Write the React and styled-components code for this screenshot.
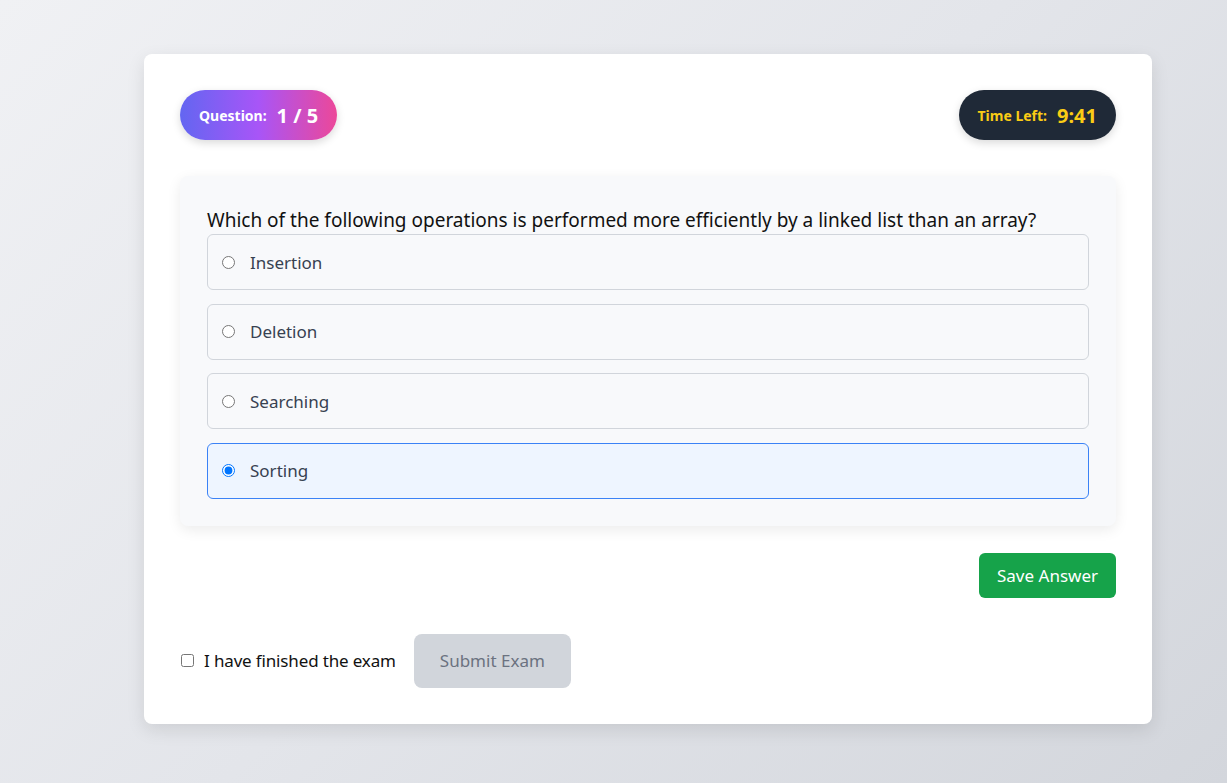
import { useState } from 'react';
import styled, { createGlobalStyle } from 'styled-components';

const GlobalStyle = createGlobalStyle`
    html, body {
        margin: 0;
        padding: 0;
    }
    body {
        font-family: "Noto Sans", "Open Sans", Arial, sans-serif;
        background: linear-gradient(135deg, #f0f1f4 0%, #e3e5ea 50%, #d3d6dc 100%);
        min-height: 100vh;
    }
`;

// Página
const Page = styled.div`
    min-height: 100vh;
    box-sizing: border-box;
    padding: 54px 0 60px 144px;
`;

// Cartão principal
const Card = styled.div`
    width: 1008px;
    box-sizing: border-box;
    background: #ffffff;
    border-radius: 8px;
    padding: 36px;
    box-shadow: 0 6px 18px rgba(0, 0, 0, 0.1);
`;

const TopBar = styled.div`
    display: flex;
    justify-content: space-between;
    align-items: center;
    margin-bottom: 36px;
`;

const Pill = styled.div`
    height: 50px;
    box-sizing: border-box;
    padding: 0 19px;
    border-radius: 25px;
    display: flex;
    align-items: center;
    gap: 10px;
    color: ${props => (props.dark ? '#facc15' : '#ffffff')};
    background: ${props => (props.dark
        ? '#1f2937'
        : 'linear-gradient(90deg, #6366f1 0%, #a855f7 50%, #ec4899 100%)')};
    box-shadow: 0 3px 8px rgba(0, 0, 0, 0.15);
`;

const PillLabel = styled.span`
    font-size: 14px;
    font-weight: 700;
`;

const PillValue = styled.span`
    font-size: 20px;
    font-weight: 700;
`;

// Painel da pergunta
const QuestionPanel = styled.div`
    background: #f8f9fb;
    border-radius: 8px;
    padding: 30px 27px 27px;
    box-shadow: 0 4px 14px rgba(0, 0, 0, 0.08);
`;

const QuestionText = styled.p`
    margin: 0;
    font-size: 19px;
    line-height: 28px;
    color: #111111;
`;

const Options = styled.div`
    display: flex;
    flex-direction: column;
    gap: 13.67px;
`;

const Option = styled.label`
    display: flex;
    align-items: center;
    height: 56px;
    box-sizing: border-box;
    padding: 0 14px;
    gap: 15px;
    border: 1px solid ${props => (props.selected ? '#3b82f6' : '#d1d5db')};
    background: ${props => (props.selected ? '#eef5ff' : '#f8f9fb')};
    border-radius: 6px;
    cursor: pointer;
    font-size: 17px;
    color: #374151;
`;

const Radio = styled.input`
    margin: 0;
    width: 13px;
    height: 13px;
`;

const Actions = styled.div`
    display: flex;
    justify-content: flex-end;
    margin-top: 27px;
`;

const SaveButton = styled.button`
    height: 45px;
    padding: 0 18px;
    border: none;
    border-radius: 6px;
    background: #16a34a;
    color: #ffffff;
    font-family: inherit;
    font-size: 17px;
    cursor: pointer;
`;

const Footer = styled.div`
    display: flex;
    align-items: center;
    margin-top: 36px;
    gap: 18px;
`;

const FinishLabel = styled.label`
    display: flex;
    align-items: center;
    gap: 10px;
    font-size: 17px;
    letter-spacing: -0.15px;
    color: #111111;
`;

const Checkbox = styled.input`
    margin: 0 0 0 1px;
    width: 13px;
    height: 13px;
`;

const SubmitButton = styled.button`
    height: 54px;
    width: 157px;
    border: none;
    border-radius: 8px;
    background: #d1d5db;
    color: #6b7280;
    font-family: inherit;
    font-size: 17px;
`;

const opcoes = ['Insertion', 'Deletion', 'Searching', 'Sorting'];

function App() {
    const [selecionada, setSelecionada] = useState('Sorting');
    const [terminou, setTerminou] = useState(false);

    return (
        <Page>
            <GlobalStyle />
            <Card>
                <TopBar>
                    <Pill>
                        <PillLabel>Question:</PillLabel>
                        <PillValue>1 / 5</PillValue>
                    </Pill>
                    <Pill dark>
                        <PillLabel>Time Left:</PillLabel>
                        <PillValue>9:41</PillValue>
                    </Pill>
                </TopBar>

                <QuestionPanel>
                    <QuestionText>
                        Which of the following operations is performed more efficiently by a linked list than an array?
                    </QuestionText>
                    <Options>
                        {opcoes.map(op => (
                            <Option key={op} selected={selecionada === op}>
                                <Radio
                                    type="radio"
                                    name="resposta"
                                    checked={selecionada === op}
                                    onChange={() => setSelecionada(op)}
                                />
                                {op}
                            </Option>
                        ))}
                    </Options>
                </QuestionPanel>

                <Actions>
                    <SaveButton>Save Answer</SaveButton>
                </Actions>

                <Footer>
                    <FinishLabel>
                        <Checkbox
                            type="checkbox"
                            checked={terminou}
                            onChange={(e) => setTerminou(e.target.checked)}
                        />
                        I have finished the exam
                    </FinishLabel>
                    <SubmitButton disabled={!terminou}>Submit Exam</SubmitButton>
                </Footer>
            </Card>
        </Page>
    );
}

export default App;
